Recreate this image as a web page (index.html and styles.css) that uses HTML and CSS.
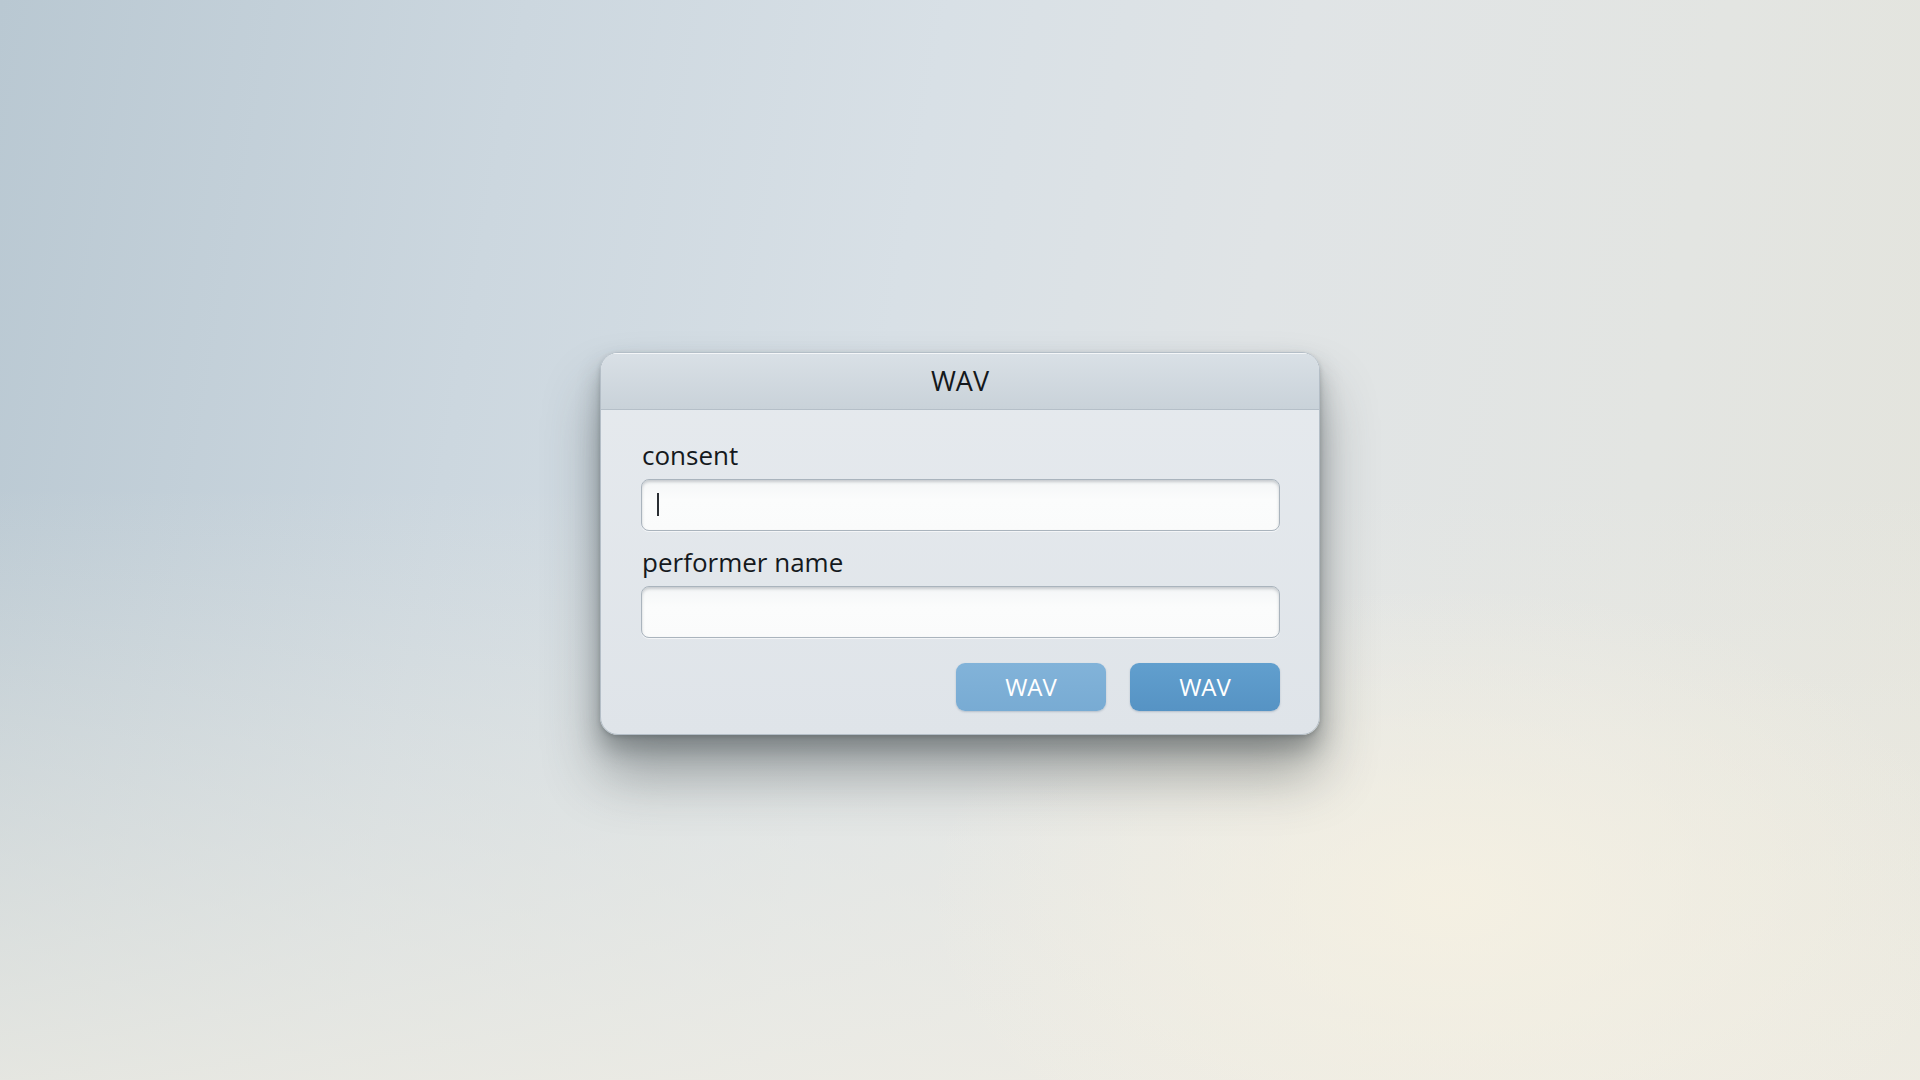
FILE: index.html
```html
<!DOCTYPE html>
<html lang="en">
<head>
<meta charset="utf-8">
<title>WAV</title>
<link rel="stylesheet" href="styles.css">
</head>
<body>
<main class="stage">
  <section class="dialog">
    <header class="dialog-title">WAV</header>
    <div class="dialog-body">
      <div class="field">
        <label class="field-label" for="consent">consent</label>
        <div class="field-input"><span class="caret"></span></div>
      </div>
      <div class="field">
        <label class="field-label" for="performer">performer name</label>
        <div class="field-input"></div>
      </div>
      <div class="actions">
        <button class="btn btn-secondary">WAV</button>
        <button class="btn btn-primary">WAV</button>
      </div>
    </div>
  </section>
</main>
</body>
</html>
```

FILE: styles.css
```css
* { box-sizing: border-box; }

html, body {
  margin: 0;
  height: 100%;
}

body {
  font-family: "Open Sans", "Noto Sans", sans-serif;
  color: #15191d;
  background:
    radial-gradient(ellipse 700px 420px at 1450px 900px, rgba(246, 241, 226, 0.85), rgba(246, 241, 226, 0) 75%),
    linear-gradient(180deg, rgba(240, 238, 230, 0) 45%, rgba(241, 238, 228, 0.75) 100%),
    linear-gradient(100deg, #b9c8d2 0%, #ccd7df 25%, #d8e0e6 45%, #e0e4e6 62%, #e3e5e2 82%, #e4e4dc 100%);
}

.stage {
  height: 100%;
  display: flex;
  align-items: center;
  justify-content: center;
  padding-top: 6px;
}

.dialog {
  width: 720px;
  border-radius: 18px;
  overflow: hidden;
  background: linear-gradient(180deg, #e6eaee 0%, #dfe4e9 100%);
  border: 1px solid #b4bec7;
  box-shadow:
    0 40px 55px rgba(60, 66, 70, 0.42),
    0 14px 22px rgba(60, 66, 70, 0.34),
    0 2px 4px rgba(60, 66, 70, 0.25),
    inset 0 1px 0 rgba(255, 255, 255, 0.6);
}

.dialog-title {
  height: 57px;
  display: flex;
  align-items: center;
  justify-content: center;
  font-size: 27px;
  color: #14181c;
  background: linear-gradient(180deg, #d9e0e6 0%, #c9d2d9 100%);
  border-bottom: 1px solid #b5bfc8;
  box-shadow: inset 0 1px 0 rgba(255, 255, 255, 0.7);
}

.dialog-body {
  padding: 28px 39px 23px 40px;
  display: flex;
  flex-direction: column;
}

.field {
  display: flex;
  flex-direction: column;
  margin-bottom: 14px;
}

.field-label {
  font-size: 26px;
  line-height: 34px;
  padding-left: 1px;
  margin-bottom: 7px;
  color: #15191d;
}

.field-input {
  height: 52px;
  border-radius: 8px;
  background: linear-gradient(180deg, #f4f6f7 0%, #fbfcfc 40%, #fafbfb 100%);
  border: 1px solid #aab4bd;
  box-shadow:
    inset 0 2px 3px rgba(90, 100, 110, 0.3),
    0 1px 0 rgba(255, 255, 255, 0.6);
  display: flex;
  align-items: center;
  padding-left: 15px;
}

.caret {
  width: 2px;
  height: 23px;
  background: #2a2e33;
}

.actions {
  display: flex;
  justify-content: flex-end;
  gap: 24px;
  margin-top: 11px;
}

.btn {
  width: 150px;
  height: 48px;
  border-radius: 9px;
  border: none;
  font-family: "Open Sans", "Noto Sans", sans-serif;
  font-size: 24px;
  color: #ffffff;
  padding: 0;
  box-shadow: 0 1px 2px rgba(50, 80, 110, 0.25);
}

.btn-secondary {
  background: linear-gradient(180deg, #82b3d9 0%, #78abd3 100%);
}

.btn-primary {
  background: linear-gradient(180deg, #619fce 0%, #5693c4 100%);
}
```
